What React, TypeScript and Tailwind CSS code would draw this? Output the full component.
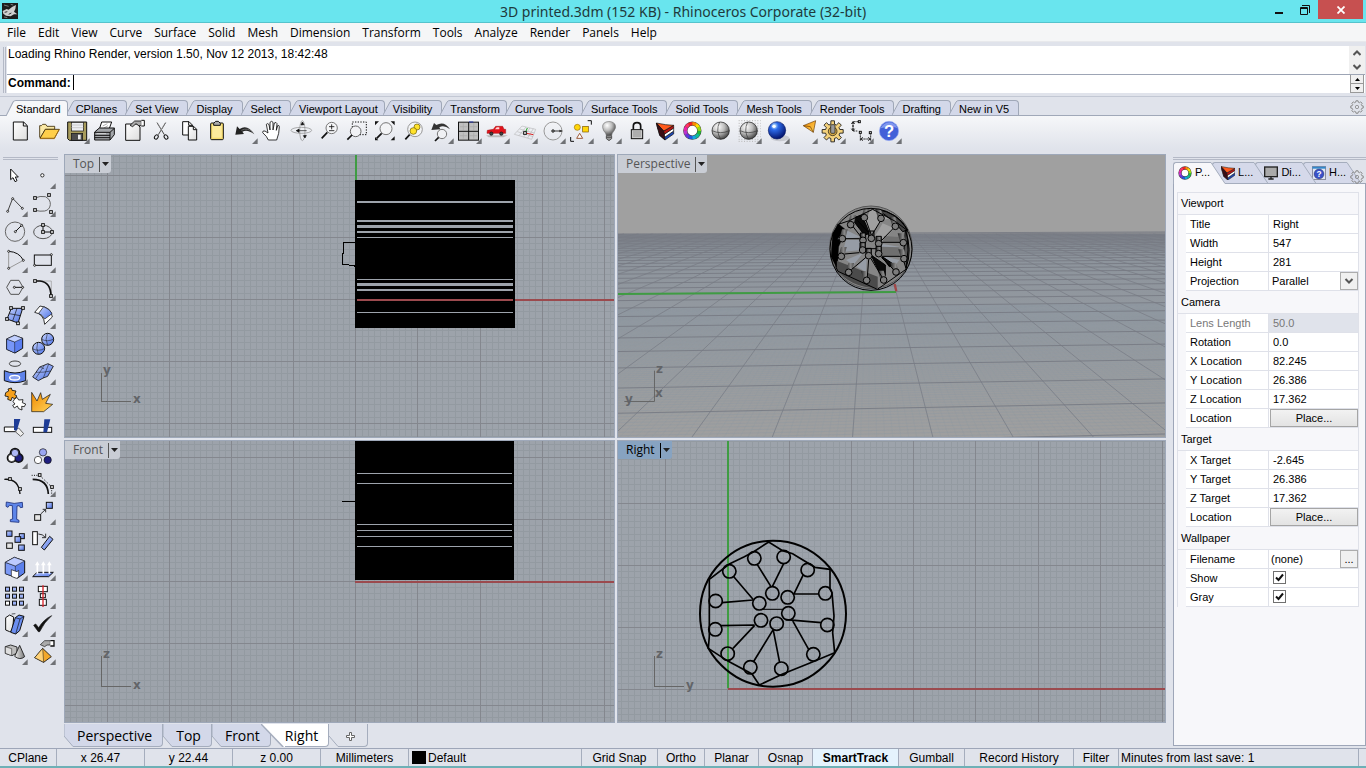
import React from "react";

/* ---------- shared drawing helpers ---------- */

type P = { x: number; y: number; corner?: boolean; label: string; children: React.ReactNode };

// Every tool glyph is drawn at three units per pixel inside a 28px cell.
function Tool({ x, y, corner, label, children }: P) {
  return (
    <button type="button" aria-label={label} title={label} className="block h-7 w-7 shrink-0">
      <svg viewBox={`${x} ${y} 84 84`} className="block h-7 w-7" fill="none" stroke="#111" strokeWidth="3">
        {children}
        {corner && <path d={`M${x + 83} ${y + 64}V${y + 81}H${x + 66}Z`} fill="#6f7175" stroke="none" />}
      </svg>
    </button>
  );
}

function Pts({ at, r = 4 }: { at: number[][]; r?: number }) {
  return (
    <>
      {at.map(([x, y]) => (
        <rect key={`${x}-${y}`} x={x - r} y={y - r} width={r * 2} height={r * 2} fill="#fff" stroke="#111" />
      ))}
    </>
  );
}

function Dots({ at, r = 3 }: { at: number[][]; r?: number }) {
  return (
    <>
      {at.map(([x, y]) => (
        <circle key={`${x}-${y}`} cx={x} cy={y} r={r} fill="#fff" stroke="#111" strokeWidth="2.5" />
      ))}
    </>
  );
}

const HUES = ["#2b3", "#1b9", "#1ad", "#25d", "#63d", "#b3c", "#e2a", "#f36", "#e22", "#f80", "#fd0", "#9d1"];

function ColorRing({ cx, cy, r, w }: { cx: number; cy: number; r: number; w: number }) {
  return (
    <g>
      <circle cx={cx} cy={cy} r={r} stroke="#444" strokeWidth={w + 3} fill="#fff" />
      {HUES.map((c, i) => (
        <circle key={c} cx={cx} cy={cy} r={r} pathLength={12} strokeDasharray="1.05 10.95" strokeDashoffset={-i} stroke={c} strokeWidth={w} />
      ))}
    </g>
  );
}

function LayerWedge({ x, y }: { x: number; y: number }) {
  return (
    <g transform={`translate(${x} ${y})`} strokeWidth="2" strokeLinejoin="round">
      <path d="M8 30L26 44L52 27V36L26 54L10 40Z" fill="#1d46b4" />
      <path d="M4 18L24 36L52 18V27L26 45L8 31Z" fill="#fff" />
      <path d="M0 3L22 27L52 10V18L24 37L4 19Z" fill="#b81414" />
      <path d="M0 3L28 8L52 10L22 27Z" fill="#ff5a1c" />
      <path d="M0 3L22 27L24 36L26 54L10 40L4 19Z" fill="#3a0d14" />
    </g>
  );
}

function gearPath(cx: number, cy: number, teeth: number, r1: number, r2: number) {
  const pts: string[] = [];
  for (let i = 0; i < teeth; i++) {
    const a = (i / teeth) * Math.PI * 2;
    const s = Math.PI / teeth;
    [[-0.65, r1], [-0.42, r2], [0.42, r2], [0.65, r1]].forEach(([k, r]) => {
      pts.push(`${(cx + Math.cos(a + s * k) * r).toFixed(1)} ${(cy + Math.sin(a + s * k) * r).toFixed(1)}`);
    });
  }
  return `M${pts.join("L")}Z`;
}

function Gear() {
  return (
    <svg viewBox="0 0 42 42" className="block h-[14px] w-[14px]" fill="none" stroke="#8b8b8b" strokeWidth="3">
      <path d={gearPath(21, 21, 8, 15, 19)} strokeLinejoin="round" />
      <circle cx="21" cy="21" r="5" strokeWidth="2.5" />
    </svg>
  );
}

function Sphere({ cx }: { cx: number }) {
  return (
    <g>
      <circle cx={cx} cy="392" r="26" fill="url(#graySphere)" strokeWidth="2" />
      <path d={`M${cx - 26} 392Q${cx} 404 ${cx + 26} 392M${cx - 3} 366Q${cx - 16} 392 ${cx} 418`} strokeWidth="2" stroke="#333" />
    </g>
  );
}

function Defs() {
  return (
    <svg className="absolute h-0 w-0" aria-hidden="true">
      <defs>
        <radialGradient id="graySphere" cx="35%" cy="28%" r="75%">
          <stop offset="0" stopColor="#fff" />
          <stop offset=".5" stopColor="#bbb" />
          <stop offset="1" stopColor="#444" />
        </radialGradient>
        <radialGradient id="blueSphere" cx="35%" cy="25%" r="75%">
          <stop offset="0" stopColor="#dff" />
          <stop offset=".3" stopColor="#2d6bea" />
          <stop offset="1" stopColor="#04156e" />
        </radialGradient>
        <linearGradient id="blueFace" x1="0" y1="0" x2="1" y2="1">
          <stop offset="0" stopColor="#c8d5ff" />
          <stop offset="1" stopColor="#4a70e4" />
        </linearGradient>
        <linearGradient id="paper" x1="0" y1="0" x2="1" y2="1">
          <stop offset="0" stopColor="#fff" />
          <stop offset="1" stopColor="#ddd" />
        </linearGradient>
        <linearGradient id="orange" x1="0" y1="0" x2="1" y2="1">
          <stop offset="0" stopColor="#f08a00" />
          <stop offset="1" stopColor="#ffd45c" />
        </linearGradient>
        <linearGradient id="grayFace" x1="0" y1="0" x2="1" y2="0">
          <stop offset="0" stopColor="#eee" />
          <stop offset="1" stopColor="#777" />
        </linearGradient>
        <linearGradient id="floor" x1="0" y1="0" x2="0" y2="1">
          <stop offset="0" stopColor="#80868e" />
          <stop offset=".12" stopColor="#8d949c" />
          <stop offset=".35" stopColor="#92989f" />
          <stop offset=".7" stopColor="#999c9f" />
          <stop offset="1" stopColor="#9f9f9f" />
        </linearGradient>
        <linearGradient id="tube" x1="0" y1="0" x2="1" y2="0">
          <stop offset="0" stopColor="#222" />
          <stop offset=".6" stopColor="#8a8a8a" />
          <stop offset="1" stopColor="#4a4a4a" />
        </linearGradient>
      </defs>
    </svg>
  );
}

/* ---------- main toolbar ---------- */

function MainToolbar() {
  return (
    <div role="toolbar" aria-label="Standard" className="flex h-[33px] bg-linear-to-b from-[#f6f7f9] to-[#e0e3eb] pt-px pl-[6px]">
      <Tool x={18} y={351} label="New">
        <path d="M40 366H71L82 377V420H40Z" fill="url(#paper)" />
        <path d="M70 366V378H82" />
      </Tool>
      <Tool x={102} y={351} label="Open">
        <path d="M119 411V377H124L128 373H137L141 379H164V388H136L121 414Z" fill="#fbe9a5" stroke="#3b2a08" strokeWidth="2.5" />
        <path d="M120 415L136 388H178L163 415Z" fill="#ffcf4a" stroke="#3b2a08" strokeWidth="2.5" />
        <path d="M120 416H163L178 388" stroke="#c27a05" strokeWidth="2" />
      </Tool>
      <Tool x={186} y={351} corner label="Save">
        <path d="M203 366H260V421H208L203 416Z" fill="#a89c5c" />
        <rect x="214" y="367" width="36" height="26" fill="#eceef2" strokeWidth="2" />
        <path d="M214 375H250M214 383H250" stroke="#bbb" strokeWidth="2" />
        <rect x="214" y="400" width="34" height="21" fill="#4d4d4d" strokeWidth="2" />
        <rect x="234" y="404" width="8" height="14" fill="#eee" stroke="none" />
      </Tool>
      <Tool x={270} y={351} label="Print">
        <path d="M298 388L305 366H335L327 388Z" fill="#fff" />
        <path d="M308 378L322 371M312 384L324 377" stroke="#888" strokeWidth="2" />
        <path d="M284 396L298 384H343V404L330 420H284Z" fill="#a3a6aa" strokeLinejoin="round" />
        <path d="M284 397H330V420M330 397L343 385M284 406H330M284 413H330" />
        <path d="M290 401H318" stroke="#eee" strokeWidth="2" />
      </Tool>
      <Tool x={354} y={351} label="Properties">
        <path d="M377 372H411L420 381V421H377Z" fill="url(#paper)" />
        <path d="M390 376L404 363H424V377H416L408 371L398 380Z" fill="#aaa" strokeWidth="2.5" />
        <path d="M424 361H433V378H424" fill="#fff" />
      </Tool>
      <Tool x={438} y={351} label="Cut">
        <path d="M471 368L493 404M497 368L475 404" stroke="#444" />
        <path d="M472 368L486 392M496 368L482 392" stroke="#999" strokeWidth="2" />
        <ellipse cx="469" cy="411" rx="5" ry="7" transform="rotate(35 469 411)" />
        <ellipse cx="498" cy="411" rx="5" ry="7" transform="rotate(-35 498 411)" />
      </Tool>
      <Tool x={522} y={351} label="Copy">
        <path d="M548 365H567L577 375V405H548Z" fill="#fff" />
        <path d="M566 365V376H577" />
        <path d="M565 379H581L590 388V420H565Z" fill="url(#paper)" />
        <path d="M580 379V389H590" />
      </Tool>
      <Tool x={606} y={351} label="Paste">
        <rect x="632" y="369" width="38" height="50" rx="3" fill="#f8dd6d" />
        <path d="M637 374H665V413H637Z" fill="#fdeb9d" stroke="none" />
        <path d="M641 376V370L647 364H655L661 370V376Z" fill="#aaa" />
      </Tool>
      <Tool x={690} y={351} corner label="Undo">
        <path d="M706 404L711 379L719 387Q742 371 763 403Q742 386 727 395L732 402Z" fill="#222" stroke="none" />
        <path d="M724 391Q743 381 760 398" stroke="#888" strokeWidth="2" />
      </Tool>
      <Tool x={774} y={351} label="Pan">
        <path d="M805 420Q801 409 788 398Q787 391 795 393L804 399L799 373Q803 368 807 374L810 390V367Q815 361 819 367V390L823 369Q829 365 831 371L829 391L833 377Q838 375 838 380Q838 400 830 420Z" fill="#fff" strokeWidth="2.5" strokeLinejoin="round" />
      </Tool>
      <Tool x={858} y={351} label="Rotate view">
        <ellipse cx="904" cy="391" rx="31" ry="9" stroke="#888" strokeWidth="2" />
        <ellipse cx="907" cy="392" rx="8" ry="30" stroke="#888" strokeWidth="2" />
        <path d="M897 387L889 392L897 397ZM912 374L907 366L903 375ZM910 407L915 414L919 406Z" fill="#111" stroke="#111" strokeWidth="2" />
        <path d="M889 392H920" strokeWidth="2" />
      </Tool>
      <Tool x={942} y={351} label="Zoom dynamic">
        <circle cx="995" cy="384" r="17" stroke="#777" fill="#f5f6f8" />
        <path d="M995 373V388M987 380H1003M987 392H1003" strokeWidth="2.5" />
        <path d="M982 397L965 415" strokeWidth="5" />
      </Tool>
      <Tool x={1026} y={351} label="Zoom window">
        <rect x="1057" y="366" width="42" height="38" strokeDasharray="4 4" />
        <circle cx="1067" cy="394" r="16" stroke="#666" fill="#f1f2f5" />
        <path d="M1056 405L1042 419" strokeWidth="5" />
      </Tool>
      <Tool x={1110} y={351} label="Zoom extents">
        <circle cx="1158" cy="386" r="18" stroke="#777" fill="#f3f4f6" />
        <path d="M1145 400L1130 415" strokeWidth="5" />
        <path d="M1125 364H1137L1125 376ZM1184 364H1172L1184 376ZM1184 421H1172L1184 409ZM1125 421H1135L1125 411Z" fill="#111" stroke="none" />
      </Tool>
      <Tool x={1194} y={351} label="Zoom selected">
        <circle cx="1245" cy="388" r="22" stroke="#999" fill="#f3f4f6" />
        <path d="M1229 404L1216 418" strokeWidth="5" />
        <circle cx="1251" cy="381" r="9" fill="#ffe22b" stroke="#6b5a00" strokeWidth="2" />
        <circle cx="1240" cy="393" r="10" fill="#ffe22b" stroke="#6b5a00" strokeWidth="2" />
      </Tool>
      <Tool x={1278} y={351} corner label="Undo view change">
        <circle cx="1326" cy="402" r="14" stroke="#777" fill="#f0f1f4" />
        <path d="M1316 412L1305 423" strokeWidth="5" />
        <path d="M1294 390L1302 369L1309 375Q1333 361 1350 388Q1332 374 1318 382L1321 388Z" fill="#333" stroke="none" />
      </Tool>
      <Tool x={12} y={351} corner label="Four viewports">
        <rect x="25.500" y="366.500" width="60" height="54" fill="#c0c0c0" />
        <path d="M56 366V420M25 394H86" />
        <path d="M30 380H52M60 380H82M30 407H52M60 407H82M40 370V390M71 370V390M40 398V416M71 398V416" stroke="#a9a9a9" strokeWidth="2" />
        <path d="M57 366H70" stroke="#2233aa" />
      </Tool>
      <Tool x={96} y={351} corner label="Named view">
        <path d="M108 406H174L160 412H116Z" fill="#bbb" stroke="none" />
        <path d="M111 400L112 391L130 388L137 379H158L162 388H167V400H111Z" fill="#e1121b" stroke="#9d1515" strokeWidth="1.5" />
        <path d="M140 382H148V388H135Z" fill="#ffd6d6" stroke="none" />
        <circle cx="124" cy="401" r="5" fill="#444" strokeWidth="2" />
        <circle cx="154" cy="401" r="5" fill="#444" strokeWidth="2" />
      </Tool>
      <Tool x={180} y={351} corner label="Set CPlane">
        <path d="M193 403L216 378L257 388L245 418ZM202 395L249 410M209 387L253 399M207 407L228 381M221 411L240 384M233 414L250 386" stroke="#aaa" strokeWidth="1.500" />
        <path d="M232 384L227 396" stroke="#1ca01c" />
        <path d="M230 400L250 404" stroke="#d22" />
        <Pts at={[[225, 399]]} />
      </Tool>
      <Tool x={264} y={351} corner label="Set view">
        <circle cx="309" cy="393" r="27" stroke="#999" />
        <path d="M309 393H336" strokeWidth="2.5" />
        <circle cx="309" cy="393" r="4" fill="#777" strokeWidth="2" />
        <path d="M339 393L328 389V397Z" fill="#333" stroke="none" />
      </Tool>
      <Tool x={348} y={351} corner label="Select">
        <circle cx="382" cy="382" r="9" fill="#ffd60a" stroke="#9b7000" strokeWidth="2" />
        <rect x="398" y="379" width="17" height="17" fill="#ffd60a" stroke="#7b5600" strokeWidth="2" />
        <path d="M380 415H398L389 400Z" fill="#fff" stroke="#8a3b12" strokeWidth="2.5" />
        <path d="M413 362H424V374M362 411V424H372" />
      </Tool>
      <Tool x={432} y={351} corner label="Lights">
        <path d="M469 406Q469 400 461 392Q452 372 468 366Q486 361 495 373Q500 383 491 394Q485 400 485 406Z" fill="url(#graySphere)" strokeWidth="2" stroke="#777" />
        <path d="M469 407H485V416L477 422L469 416ZM469 412H485" fill="#999" strokeWidth="2.5" stroke="#444" />
      </Tool>
      <Tool x={516} y={351} corner label="Lock">
        <path d="M550 389V378Q550 368 561 368Q572 368 572 378V389" strokeWidth="5" />
        <rect x="544" y="389" width="34" height="27" fill="#c9c9c9" />
        <path d="M549 396H573M549 402H573M549 408H573" stroke="#777" strokeWidth="2" />
      </Tool>
      <Tool x={600} y={351} corner label="Layers">
        <LayerWedge x={619} y={366} />
      </Tool>
      <Tool x={684} y={351} corner label="Object properties">
        <ColorRing cx={727} cy={392} r={21} w={10} />
      </Tool>
      <Tool x={768} y={351} label="Shade">
        <Sphere cx={812} />
      </Tool>
      <Tool x={852} y={351} corner label="Render preview">
        <path d="M866 362H932M866 370H932M866 378H932M866 386H932M866 394H932M866 402H932M866 410H932M866 418H932M866 424H932" stroke="#b5b5b5" strokeDasharray="3 5" />
        <Sphere cx={896} />
      </Tool>
      <Tool x={936} y={351} corner label="Render">
        <ellipse cx="990" cy="414" rx="28" ry="10" fill="#c8cad0" stroke="none" />
        <circle cx="981" cy="391" r="26" fill="url(#blueSphere)" stroke="#0b1c66" strokeWidth="2" />
        <circle cx="972" cy="379" r="5" fill="#fff" stroke="none" />
      </Tool>
      <Tool x={1020} y={351} corner label="Spotlight">
        <path d="M1060 377L1097 362L1090 397Z" fill="url(#orange)" strokeWidth="2" stroke="#6b3b00" />
        <path d="M1060 377L1081 380L1090 397" stroke="#6b3b00" strokeWidth="2" />
      </Tool>
      <Tool x={1104} y={351} corner label="Options">
        <path d={gearPath(1148, 394, 8, 22, 32)} fill="#f3d17c" strokeWidth="2.5" strokeLinejoin="round" />
        <circle cx="1148" cy="394" r="13" fill="#d9ab45" strokeWidth="2" />
        <rect x="1142" y="374" width="13" height="26" rx="3" fill="#999" strokeWidth="2" />
      </Tool>
      <Tool x={1188} y={351} corner label="Dimensions">
        <path d="M1226 365H1209V393H1222M1209 365V393M1231 397V424M1262 397V424M1231 417H1262" strokeDasharray="7 2" strokeWidth="2.5" />
        <path d="M1204 372L1209 365L1214 372M1204 386L1209 393L1214 386M1239 412L1232 417L1239 422M1254 412L1261 417L1254 422" strokeWidth="2.5" />
        <Pts at={[[1228, 365], [1231, 397], [1261, 398]]} r={3} />
      </Tool>
      <Tool x={1272} y={351} corner label="Help">
        <circle cx="1317" cy="393" r="29" fill="#4260d8" stroke="#9fb1f3" strokeWidth="2" />
        <path d="M1292 385Q1300 368 1318 367Q1336 369 1342 384Q1320 376 1292 385Z" fill="#7f97ee" stroke="none" />
        <text x="1317" y="411" textAnchor="middle" fontSize="50" fontWeight="bold" fill="#fff" stroke="none" fontFamily="Liberation Sans, sans-serif">?</text>
      </Tool>
    </div>
  );
}

/* ---------- side toolbar ---------- */

const B = "url(#blueFace)";

function SideToolbar() {
  return (
    <aside className="w-16 shrink-0">
      <div className="mx-[3px] mt-2 mr-[6px] h-[3px] border-y border-[#b4b9c6]" />
      <div role="toolbar" aria-label="Main" className="mt-[2px] grid w-14 grid-cols-2">
        <Tool x={0} y={36} label="Cancel">
          <path d="M32 57V89L39 83L45 95L51 92L46 81H55Z" fill="#fff" />
        </Tool>
        <Tool x={84} y={36} corner label="Point">
          <circle cx="127" cy="76" r="5" fill="#fff" strokeWidth="2.5" />
        </Tool>
        <Tool x={0} y={120} corner label="Polyline">
          <path d="M23 184L38 145L67 175" stroke="#444" />
          <Dots at={[[23, 184], [38, 146], [67, 175]]} />
        </Tool>
        <Tool x={84} y={120} corner label="Curve">
          <path d="M105 144Q120 137 136 140Q152 148 151 164Q149 180 134 183Q120 185 105 181" stroke="#666" />
          <Pts at={[[105, 144], [147, 135], [153, 186], [105, 180]]} />
        </Tool>
        <Tool x={0} y={204} corner label="Circle">
          <circle cx="45" cy="245" r="29" stroke="#666" />
          <path d="M46 245L64 227" />
          <Dots at={[[46, 245], [65, 226]]} />
        </Tool>
        <Tool x={84} y={204} corner label="Ellipse">
          <ellipse cx="129" cy="246" rx="28" ry="20" stroke="#555" />
          <path d="M129 226V246H155" />
          <Pts at={[[129, 225], [129, 246], [156, 246]]} />
        </Tool>
        <Tool x={0} y={288} corner label="Arc">
          <path d="M26 355V304M26 355L70 331" stroke="#999" />
          <path d="M26 304Q58 306 70 331" />
          <Dots at={[[26, 304], [26, 355], [70, 331]]} />
        </Tool>
        <Tool x={84} y={288} corner label="Rectangle">
          <rect x="103" y="315" width="51" height="31" />
          <Dots at={[[154, 314], [104, 346]]} />
        </Tool>
        <Tool x={0} y={372} corner label="Polygon">
          <path d="M20 412L32 391H57L69 412L57 433H32Z" stroke="#555" />
          <path d="M43 412H68" />
          <Dots at={[[43, 412], [68, 412]]} />
        </Tool>
        <Tool x={84} y={372} corner label="Fillet">
          <path d="M105 393H154V438" stroke="#999" strokeWidth="2" />
          <path d="M105 393H120Q152 396 153 438" strokeWidth="5" />
          <Pts at={[[105, 393], [153, 438]]} />
        </Tool>
        <Tool x={0} y={456} corner label="Surface">
          <path d="M34 475H68L54 519L21 507Z" fill={B} />
          <path d="M51 475L38 513M28 491L61 497" strokeWidth="2" />
          <Pts at={[[33, 474], [69, 474], [54, 520], [21, 507]]} />
        </Tool>
        <Tool x={84} y={456} corner label="Loft">
          <path d="M104 487L120 468Q154 472 157 501L134 523Q132 492 104 487Z" fill="#fff" strokeWidth="2.5" />
          <path d="M116 490L131 470Q152 478 156 491L134 507Q128 495 116 490Z" fill={B} strokeWidth="2" />
        </Tool>
        <Tool x={0} y={540} corner label="Box">
          <path d="M20 567L44 556L68 565V595L45 609L20 598Z" fill="#5b7ef0" />
          <path d="M20 567L44 576V609L20 598Z" fill="#7796f8" strokeWidth="1.5" />
          <path d="M20 567L44 556L68 565L44 576Z" fill="#c2d0ff" strokeWidth="1.5" />
        </Tool>
        <Tool x={84} y={540} corner label="Sphere union">
          <circle cx="143" cy="568" r="18" fill={B} />
          <circle cx="116" cy="595" r="18" fill={B} />
          <path d="M125 568Q143 577 161 567M98 596Q116 606 134 595M142 551Q134 568 143 586M113 577Q107 595 115 613" strokeWidth="1.5" />
        </Tool>
        <Tool x={0} y={624} corner label="Project curve">
          <ellipse cx="45" cy="641" rx="17" ry="8" stroke="#444" />
          <path d="M13 662Q45 676 77 662V692Q45 704 13 692Z" fill="#5f83ea" />
          <ellipse cx="44" cy="683" rx="15" ry="7" fill="#8ba3f0" stroke="#fff" strokeWidth="4" />
        </Tool>
        <Tool x={84} y={624} corner label="Mesh">
          <path d="M98 681L119 651Q132 646 144 641L160 649L143 679Q129 683 115 692Z" fill={B} strokeWidth="2.5" />
          <path d="M108 667Q130 668 152 663M133 646L107 686M146 642L130 684M119 651L132 656" strokeWidth="1.5" />
        </Tool>
        <Tool x={0} y={-12} label="Join">
          <path d="M17 8L26 3L24 -3L34 -6L36 1L48 3L44 14L51 18L44 26L36 22L33 32L23 28L25 20L15 18Z" fill="#f5a01c" strokeWidth="2.5" strokeLinejoin="round" />
          <path d="M43 28L51 22L56 30L69 29L67 38L77 42L73 50L65 49L66 60L56 56L52 48L43 54L38 46L45 42L39 35Z" fill="#fff" strokeWidth="2.5" strokeLinejoin="round" />
        </Tool>
        <Tool x={84} y={-12} label="Explode">
          <path d="M95 7L111 33L122 8L127 28L151 13L137 40L158 43L131 65H95Z" fill="url(#orange)" strokeWidth="2" />
        </Tool>
        <Tool x={0} y={72} label="Trim">
          <path d="M13 111H48V125H13Z" fill="#fff" />
          <path d="M50 117L56 114L71 131L62 139L47 126Z" fill="#eee" stroke="#666" />
          <path d="M42 87H61L51 121H42Z" fill="#1e3c96" stroke="none" />
        </Tool>
        <Tool x={84} y={72} label="Split">
          <rect x="100" y="112" width="55" height="15" fill="#fff" />
          <path d="M133 88H151L141 127H130Z" fill="#1e3c96" stroke="none" />
        </Tool>
        <Tool x={0} y={156} corner label="Group">
          <g strokeWidth="8">
            <circle cx="45" cy="189" r="12" />
            <circle cx="35" cy="204" r="11" />
            <circle cx="56" cy="204" r="11" />
          </g>
          <circle cx="35" cy="204" r="11" fill="#fff" strokeWidth="2" />
          <circle cx="56" cy="204" r="11" fill="#1e1e80" strokeWidth="2" />
          <circle cx="45" cy="189" r="11" fill="#aeb8f5" strokeWidth="2" />
        </Tool>
        <Tool x={84} y={156} label="Ungroup">
          <circle cx="129" cy="187" r="11" fill="#9aa6f2" strokeWidth="2" />
          <circle cx="114" cy="210" r="11" fill="#fff" strokeWidth="2" />
          <circle cx="143" cy="210" r="11" fill="#1e1e80" strokeWidth="2" />
        </Tool>
        <Tool x={0} y={240} label="Edit points">
          <path d="M13 268Q56 265 60 312" strokeWidth="4" />
          <Pts at={[[30, 267], [60, 297]]} />
        </Tool>
        <Tool x={84} y={240} corner label="Control points">
          <path d="M95 256H119L155 291V316" strokeDasharray="3 4" />
          <path d="M98 268Q143 268 145 312" strokeWidth="5" />
          <Pts at={[[119, 255], [156, 291]]} />
        </Tool>
        <Tool x={0} y={324} label="Text">
          <path d="M19 336Q42 344 67 337L68 352L61 353L58 347L51 348L50 388L57 391V397L31 395V389L38 387L37 347L28 346L24 352L18 349Z" fill="#5e86ea" stroke="#1c2f7c" strokeWidth="2.5" strokeLinejoin="round" />
        </Tool>
        <Tool x={84} y={324} corner label="Move">
          <rect x="104" y="374" width="18" height="17" fill="#e5e5e5" />
          <rect x="139" y="337" width="18" height="18" fill={B} />
          <path d="M122 372L136 359M128 358H137V367" strokeWidth="2.5" />
        </Tool>
        <Tool x={0} y={408} label="Copy objects">
          <rect x="58" y="431" width="15" height="15" fill={B} />
          <rect x="45" y="440" width="17" height="17" fill={B} />
          <rect x="20" y="423" width="16" height="16" fill={B} />
          <rect x="20" y="459" width="17" height="16" fill="#e5e5e5" />
          <rect x="56" y="465" width="17" height="16" fill={B} />
        </Tool>
        <Tool x={84} y={408} label="Rotate">
          <rect x="98" y="425" width="14" height="39" fill="#fff" />
          <path d="M124 472L149 439L159 448L133 480Z" fill={B} />
          <path d="M115 432Q128 432 136 442M137 431V443H126" strokeWidth="2.5" />
        </Tool>
        <Tool x={0} y={492} corner label="Boolean">
          <path d="M16 517L43 502L74 513V549L53 564L16 551Z" fill="#5c80ec" />
          <path d="M16 517L46 528V562L16 551Z" fill="#7c9af6" strokeWidth="1.5" />
          <path d="M16 517L43 502L74 513L46 528Z" fill="#bccbff" strokeWidth="1.5" />
          <path d="M34 539L51 545L56 541V562L49 565L34 559Z" fill="#fff" strokeWidth="2" />
        </Tool>
        <Tool x={84} y={492} corner label="Project">
          <path d="M98 560L111 547H160L146 560Z" fill={B} />
          <path d="M112 551V522M130 551V522M148 551V522" stroke="#fff" strokeWidth="5" />
          <path d="M105 526L112 514L119 526ZM123 526L130 514L137 526ZM141 526L148 514L155 526Z" fill="#fff" stroke="none" />
        </Tool>
        <Tool x={0} y={576} corner label="Array">
          {[0, 1, 2].map((r) =>
            [0, 1, 2].map((c) => (
              <rect key={`${r}${c}`} x={16.5 + c * 21} y={591.5 + r * 21} width="12" height="12" fill={r === 2 && c === 0 ? "#fff" : "#9db2f5"} />
            )),
          )}
        </Tool>
        <Tool x={84} y={576} corner label="Align">
          <rect x="115" y="589" width="27" height="16" fill="#fff" />
          <rect x="121" y="611" width="15" height="12" fill="#fff" />
          <rect x="118" y="628" width="21" height="18" fill="#fff" />
          <path d="M129 586V651" stroke="#d8222a" strokeWidth="4" />
        </Tool>
        <Tool x={0} y={660} corner label="Shear">
          <path d="M17 683L29 675L41 681L38 722L29 725L17 720Z" fill="url(#paper)" />
          <path d="M46 683L57 675L72 679L59 722L47 732L32 727Z" fill="#6b8ef0" />
          <path d="M46 683L60 687L47 732M60 687L72 679M35 672L46 671" strokeWidth="2" />
        </Tool>
        <Tool x={84} y={660} corner label="Check">
          <path d="M101 706L107 702L116 713Q131 688 155 677Q132 697 119 725H115Z" fill="#111" strokeWidth="2" />
        </Tool>
        <Tool x={0} y={744} corner label="Solids">
          <path d="M16 770L32 765L51 771V789L36 797L16 790Z" fill="#bdbdbd" strokeWidth="2.5" />
          <path d="M16 770L35 776V797L16 790Z" fill="#dedede" strokeWidth="1.5" />
          <path d="M59 766L74 800Q60 812 44 799Z" fill="url(#grayFace)" strokeWidth="2.5" />
        </Tool>
        <Tool x={84} y={744} corner label="Edit solid">
          <path d="M128 775L154 800L131 817L104 803Z" fill="#f2a82c" strokeWidth="2.5" />
          <path d="M128 775L131 817L104 803Z" fill="#ffd277" strokeWidth="1.5" />
          <path d="M121 764L134 752H151V765H141L134 770Z" fill="#aaa" strokeWidth="2" />
          <path d="M151 752H162V768H151" fill="#fff" strokeWidth="4" />
        </Tool>
      </div>
    </aside>
  );
}

/* ---------- viewports ---------- */

function gridPath(x0: number, y0: number, x1: number, y1: number, ox: number, oy: number, step: number) {
  let d = "";
  for (let i = Math.ceil((x0 - ox) / step); ox + i * step < x1; i++) d += `M${Math.floor(ox + i * step) + 0.5} ${y0}V${y1}`;
  for (let i = Math.ceil((y0 - oy) / step); oy + i * step < y1; i++) d += `M${x0} ${Math.floor(oy + i * step) + 0.5}H${x1}`;
  return d;
}

function Grid({ x, y, ox, oy }: { x: number; y: number; ox: number; oy: number }) {
  return (
    <>
      <path d={gridPath(x, y, x + 1600, y + 1000, ox, oy, 6.21)} stroke="#939aa1" />
      <path d={gridPath(x, y, x + 1600, y + 1000, ox, oy, 62.1)} stroke="#84878e" />
    </>
  );
}

function Viewport({ name, x, y, active, children }: { name: string; x: number; y: number; active?: boolean; children: React.ReactNode }) {
  return (
    <section aria-label={name} className="relative min-h-0 min-w-0 overflow-hidden border border-[#9ea8b9] bg-[#9da3ab]">
      <svg className="block h-full w-full" fill="none" stroke="#000">
        <g transform={`translate(${-x} ${-y})`}>{children}</g>
      </svg>
      <button
        type="button"
        className={`absolute top-0 left-0 flex h-[18px] items-center rounded-br-[3px] pl-2 ${active ? "bg-[#87a3c1] text-black" : "bg-[#c9cdd5] text-[#555]"}`}
      >
        <span className="pr-[5px] font-['Open_Sans',sans-serif] text-xs leading-4">{name}</span>
        <span className="h-[15px] w-px bg-current" />
        <svg viewBox="0 0 11 6" className="h-[6px] w-[11px]">
          <path d="M2 1H9L5.5 5Z" fill="#222" />
        </svg>
      </button>
    </section>
  );
}

function AxisText({ x, y, children }: { x: number; y: number; children: string }) {
  return (
    <text x={x} y={y} fontSize="12" fontWeight="bold" fill="#626468" stroke="none" fontFamily="DejaVu Sans, sans-serif">
      {children}
    </text>
  );
}

function Bands({ rows, x, w }: { rows: number[][]; x: number; w: number }) {
  return (
    <>
      {rows.map(([y, h]) => (
        <rect key={y} x={x} y={y} width={w} height={h} fill="#9da3ab" stroke="none" />
      ))}
    </>
  );
}

function TopView() {
  return (
    <Viewport name="Top" x={65} y={155}>
      <g shapeRendering="crispEdges">
        <Grid x={65} y={155} ox={355.8} oy={299.4} />
        <path d="M356 155V181" stroke="#3f9c43" strokeWidth="2" />
        <rect x="355" y="180" width="160" height="148" fill="#000" stroke="none" />
        <Bands x={357} w={156} rows={[[201, 2], [220, 2], [225, 3], [231, 2], [237, 1], [279, 1], [283, 3], [289, 2], [312, 1]]} />
        <path d="M357 300H513M515 300H614" stroke="#9b4a4e" strokeWidth="2" />
        <path d="M355 242.500H343.500V253L342.500 254V264.500H348L350 265.500H354L355 266.500" />
        <path d="M101.500 373V401.500H131" stroke="#666" />
      </g>
      <AxisText x={103} y={374}>y</AxisText>
      <AxisText x={133} y={403}>x</AxisText>
    </Viewport>
  );
}

function FrontView() {
  return (
    <Viewport name="Front" x={65} y={441}>
      <g shapeRendering="crispEdges">
        <Grid x={65} y={441} ox={355.8} oy={581.2} />
        <rect x="355" y="441" width="159" height="139" fill="#000" stroke="none" />
        <Bands x={357} w={155} rows={[[473, 1], [483, 1], [524, 1], [530, 1], [536, 1], [546, 1]]} />
        <path d="M342 501.500H355" />
        <path d="M355 582H614" stroke="#9b4a4e" strokeWidth="2" />
        <path d="M101.500 656V686.500H131" stroke="#666" />
      </g>
      <AxisText x={103} y={658}>z</AxisText>
      <AxisText x={133} y={689}>x</AxisText>
    </Viewport>
  );
}

const OUTER = [[415, 367], [503, 363], [340, 406], [575, 402], [628, 472], [299, 495], [298, 580], [634, 567], [335, 653], [403, 694], [496, 698], [592, 655]];
const INNER = [[469, 472], [515, 484], [430, 502], [517, 532], [435, 553], [482, 563]];

function RightView() {
  return (
    <Viewport name="Right" x={618} y={441} active>
      <g shapeRendering="crispEdges">
        <Grid x={618} y={441} ox={727.5} oy={689.4} />
        <path d="M728 441V688" stroke="#3f9c43" strokeWidth="2" />
        <path d="M728 689H2000" stroke="#9b4a4e" strokeWidth="2" />
        <path d="M654.500 656V686.500H684" stroke="#666" />
      </g>
      <AxisText x={656} y={658}>z</AxisText>
      <AxisText x={686} y={689}>y</AxisText>
      <g transform="translate(616 436) scale(0.33333)" strokeWidth="5">
        <circle cx="471" cy="533" r="219" strokeWidth="6" />
        <path strokeWidth="5" d="M458 318L412 348L385 362L340 384L280 430V600L277 637L337 676L408 714L430 747L500 714L580 682L656 650L650 590L654 540L648 470L642 460V400L597 394L530 353L500 344Z" />
        {OUTER.concat(INNER).map(([x, y]) => (
          <circle key={`${x}${y}`} cx={x} cy={y} r="20" />
        ))}
        <path d="M424 386L465 452M503 383L469 452M352 421L411 490M562 416L534 474H608M318 500L411 492M315 569L416 567M351 637L416 568M472 580L412 678M472 583L491 680M510 551L615 560M528 551L578 640" />
        <path d="M440 520H502" strokeWidth="3" />
      </g>
    </Viewport>
  );
}

// Ground lines: rails converge on the vanishing point, rungs are evenly spaced in inverse depth.
const VX = 763;
const VY = 120;

function rails(step: number, y0: number) {
  let d = "";
  for (let s = 0.253 - 0.325 * 32; s < 0.325 * 40; s += step) {
    d += `M${(VX + s * (y0 - VY)).toFixed(1)} ${y0}L${(VX + s * 1200).toFixed(1)} ${VY + 1200}`;
  }
  return d;
}

function rungs(step: number, from: number, to: number) {
  let d = "";
  for (let u = from; u < to; u += step) {
    const h = 1 / u;
    d += `M0 ${(VY + h).toFixed(1)}L3000 ${(VY + h * (1 - 3000 / 35500)).toFixed(1)}`;
  }
  return d;
}

const HUBS = [[741, 271], [766, 265], [788, 281], [740, 300], [758, 317], [788, 311]];
const RIM = [[745, 203], [795, 205], [838, 229], [862, 278], [864, 326], [840, 366], [803, 390], [752, 391], [698, 367], [676, 319], [679, 266], [704, 224]];

function PerspectiveView() {
  return (
    <Viewport name="Perspective" x={618} y={155}>
      <g transform="translate(616 150) scale(0.33333)">
        <rect x="0" y="0" width="4000" height="252" fill="#a0a0a0" stroke="none" />
        <rect x="0" y="252" width="4000" height="612" fill="url(#floor)" stroke="none" />
        <rect x="0" y="864" width="4000" height="1000" fill="#9f9f9f" stroke="none" />
        <g strokeWidth="3">
          <path d={rails(0.0325, 480)} stroke="#8f98a3" opacity=".25" />
          <path d={rungs(0.000019, 0.0009, 0.0028)} stroke="#8c96a3" opacity=".35" />
          <path d={rails(0.325, 252)} stroke="#7a7e86" opacity=".8" />
          <path d={rungs(0.00019, 0.000923, 0.0076)} stroke="#777b83" opacity=".9" />
        </g>
        <path d="M0 432L840 426" stroke="#3f9c43" strokeWidth="6" />
        <path d="M836 402L841 424M803 280L806 292" stroke="#a04848" strokeWidth="7" />
        <path d="M115.500 662V754.500H25" stroke="#666" strokeWidth="3" />
        <circle cx="765" cy="292" r="124" fill="#858585" stroke="#555" strokeWidth="3" />
        <path d="M650 250L668 222L690 240L668 290L664 358L645 320Z" fill="#000" />
        <path d="M662 332L785 380V415Q700 412 662 358Z" fill="#4b4b4b" stroke="none" />
        <path d="M690 240L735 262L664 268ZM690 270H735V300L680 306ZM690 330L742 308L712 345ZM722 350L752 322L750 366ZM800 282L850 290L848 312L792 300ZM800 318L850 330L835 350Z" fill="#969ca5" stroke="none" />
        <path d="M706 205L736 196L765 250L745 255ZM725 212L760 250M765 315L808 345V378L790 366ZM796 318L836 345L820 350Z" fill="#0a0a0a" strokeWidth="3" />
        <path d="M770 180L740 195L764 254L795 212L822 205ZM800 220L835 235L796 275L776 260Z" fill="#a0a0a0" stroke="none" />
        <path d="M792 290L850 292V320H795ZM805 258L858 262L852 278H800Z" fill="#6f6f6f" stroke="none" />
        <path d="M780 178Q850 188 875 240L860 245Q830 205 780 178Z" fill="#444" strokeWidth="3" />
        <path d="M868 240Q890 300 870 355L862 330Z" fill="#555" strokeWidth="3" />
        {HUBS.map(([x, y]) => (
          <g key={`${x}${y}`} strokeWidth="3">
            <path d={`M${x - 8} ${y}V${y - 22}H${x + 8}V${y}`} fill="url(#tube)" />
            <circle cx={x} cy={y} r="10" fill="#7c7c7c" />
          </g>
        ))}
        {RIM.map(([x, y]) => {
          const s = x < 750 ? 8 : -8;
          return (
            <g key={`${x}${y}`} strokeWidth="3">
              <path d={`M${x - 9} ${y}L${x - 9 + s} ${y - 28}H${x + 8 + s}L${x + 9} ${y}Z`} fill="url(#tube)" stroke="none" />
              <circle cx={x} cy={y} r="10" fill="#7c7c7c" />
            </g>
          );
        })}
        <path
          strokeWidth="3"
          d="M751 213L766 255M792 215L768 255M830 237L796 272M798 277H852M798 319H854M796 322L832 358M765 326L798 381M758 328L754 381M750 322L706 359M686 312L730 308M688 266H731M712 231L736 262M750 296H780"
        />
        <path d="M770 178L700 212L664 224L660 352L666 364L784 418L870 358L876 300L872 240L838 214Z" strokeWidth="3" />
        <circle cx="765" cy="298" r="123" strokeWidth="3" />
      </g>
      <AxisText x={656} y={373}>z</AxisText>
      <AxisText x={655} y={397}>x</AxisText>
      <AxisText x={625} y={403}>y</AxisText>
    </Viewport>
  );
}

/* ---------- properties panel ---------- */

type Row = { label: string; value: string; kind?: "select" | "button" | "check" | "file" | "off" };

const GROUPS: { title: string; rows: Row[] }[] = [
  {
    title: "Viewport",
    rows: [
      { label: "Title", value: "Right" },
      { label: "Width", value: "547" },
      { label: "Height", value: "281" },
      { label: "Projection", value: "Parallel", kind: "select" },
    ],
  },
  {
    title: "Camera",
    rows: [
      { label: "Lens Length", value: "50.0", kind: "off" },
      { label: "Rotation", value: "0.0" },
      { label: "X Location", value: "82.245" },
      { label: "Y Location", value: "26.386" },
      { label: "Z Location", value: "17.362" },
      { label: "Location", value: "Place...", kind: "button" },
    ],
  },
  {
    title: "Target",
    rows: [
      { label: "X Target", value: "-2.645" },
      { label: "Y Target", value: "26.386" },
      { label: "Z Target", value: "17.362" },
      { label: "Location", value: "Place...", kind: "button" },
    ],
  },
  {
    title: "Wallpaper",
    rows: [
      { label: "Filename", value: "(none)", kind: "file" },
      { label: "Show", value: "", kind: "check" },
      { label: "Gray", value: "", kind: "check" },
    ],
  },
];

function Value({ row, id }: { row: Row; id: string }) {
  if (row.kind === "select")
    return (
      <div className="relative flex h-[18px]">
        <select id={id} defaultValue={row.value} className="w-full appearance-none bg-white pl-[3px]">
          <option>Parallel</option>
          <option>Perspective</option>
        </select>
        <span className="pointer-events-none absolute top-0 right-0 flex h-[18px] w-[18px] items-center justify-center border border-[#acacac] bg-[#f0f0f0]">
          <svg viewBox="0 0 10 8" className="h-2 w-[10px]" fill="none" stroke="#555" strokeWidth="2">
            <path d="M1.500 2L5 5.500L8.500 2" />
          </svg>
        </span>
      </div>
    );
  if (row.kind === "button")
    return (
      <div className="flex h-[18px] pl-px">
        <button id={id} type="button" className="w-full border border-[#a5a5a5] bg-linear-to-b from-[#f2f2f2] to-[#e3e3e3] leading-4">
          {row.value}
        </button>
      </div>
    );
  if (row.kind === "check")
    return (
      <div className="relative flex h-[18px] items-center pb-px pl-1">
        <input id={id} type="checkbox" defaultChecked className="peer h-[13px] w-[13px] appearance-none border border-[#707070] bg-white" />
        <svg viewBox="0 0 13 13" className="pointer-events-none absolute left-1 hidden h-[13px] w-[13px] peer-checked:block" fill="none" stroke="#111" strokeWidth="2">
          <path d="M3 6.500L5.500 9L10 3.500" />
        </svg>
      </div>
    );
  if (row.kind === "file")
    return (
      <div className="flex h-[18px]">
        <input id={id} readOnly defaultValue={row.value} className="min-w-0 flex-1 bg-white pl-[2px]" />
        <button type="button" aria-label="Browse" className="w-[18px] border border-[#acacac] bg-[#f0f0f0] leading-4">
          ...
        </button>
      </div>
    );
  return (
    <input
      id={id}
      defaultValue={row.value}
      disabled={row.kind === "off"}
      className="block h-[18px] w-full bg-white pl-1 disabled:bg-[#e0e3eb] disabled:text-[#777]"
    />
  );
}

const PANEL_TABS = [
  { label: "P...", z: "z-40", icon: <ColorRing cx={21} cy={21} r={15} w={7} /> },
  { label: "L...", z: "z-30", icon: <g transform="translate(0 -1) scale(0.8 0.8)"><LayerWedge x={0} y={0} /></g> },
  {
    label: "Di...",
    z: "z-20",
    icon: (
      <>
        <rect x="2" y="3" width="38" height="29" fill="#aaa" stroke="#222" strokeWidth="4" />
        <path d="M13 39H29M21 32V39" stroke="#222" strokeWidth="4" />
      </>
    ),
  },
  {
    label: "H...",
    z: "z-10",
    icon: (
      <>
        <rect x="1" y="2" width="40" height="38" fill="#dfe6f6" stroke="#667" strokeWidth="2" />
        <path d="M1 5H41" stroke="#38c" strokeWidth="6" />
        <circle cx="21" cy="24" r="15" fill="#3b52c8" />
        <text x="21" y="33" fontSize="25" fontWeight="bold" textAnchor="middle" fill="#fff" stroke="none" fontFamily="Liberation Sans, sans-serif">?</text>
      </>
    ),
  },
];

function PropertiesPanel() {
  return (
    <aside className="flex w-[193px] shrink-0 flex-col pb-[2px] text-[11px]">
      <div className="mt-2 h-[3px] border-y border-[#b4b9c6]" />
      <div className="relative z-10 mt-[2px] -mb-px flex h-[22px] items-stretch">
        {PANEL_TABS.map((t, i) => (
          <button key={t.label} type="button" className={`relative flex h-full items-stretch ${t.z} ${i ? "-ml-[13px]" : ""}`}>
            <span
              className={`flex items-center gap-[3px] rounded-tl-[3px] border-t border-l border-[#a5adbd] pb-px leading-4 ${i ? "border-b bg-[#d5d9ea] pl-2" : "bg-[#f7f7fa] pl-1"}`}
            >
              <svg viewBox="0 0 42 42" className="h-[14px] w-[14px]" fill="none" stroke="#222">
                {t.icon}
              </svg>
              <span className="pb-[2px]">{t.label}</span>
            </span>
            <svg viewBox="0 0 15 22" className="block h-[22px] w-[15px]" preserveAspectRatio="none">
              <path d="M0 0.500H1L15 21.500V22H0Z" fill={i ? "#d5d9ea" : "#f7f7fa"} />
              <path d={i ? "M0 0.500H1L15 21.500H0" : "M0 0.500H1L15 21.500"} stroke="#a5adbd" fill="none" />
            </svg>
          </button>
        ))}
        <button type="button" aria-label="Panel options" className="absolute right-[2px] bottom-0 z-50">
          <Gear />
        </button>
      </div>
      <div className="flex-1 border border-[#9ea6b8] bg-[#f7f7fa] pt-2 pr-[6px] pl-[3px]">
        <table className="w-full table-fixed border-separate border-spacing-0 border-t border-l border-[#dfe1e9]">
          <colgroup>
            <col className="w-2" />
            <col className="w-[83px]" />
            <col />
          </colgroup>
          {GROUPS.map((g, gi) => (
            <tbody key={g.title}>
              <tr>
                <th colSpan={3} scope="rowgroup" className={`border-r border-b border-[#dfe1e9] p-0 pl-[3px] text-left font-normal ${gi ? "h-[23px]" : "h-[22px]"}`}>
                  {g.title}
                </th>
              </tr>
              {g.rows.map((r) => {
                const id = `${g.title}-${r.label}`;
                return (
                  <tr key={r.label} className="h-[19px]">
                    <td className="p-0" />
                    <th scope="row" className="border-r border-b border-[#dfe1e9] bg-white p-0 pl-1 text-left font-normal">
                      <label htmlFor={id} className={r.kind === "off" ? "text-[#777]" : ""}>
                        {r.label}
                      </label>
                    </th>
                    <td className="border-r border-b border-[#dfe1e9] bg-white p-0">
                      <Value row={r} id={id} />
                    </td>
                  </tr>
                );
              })}
            </tbody>
          ))}
        </table>
      </div>
    </aside>
  );
}

/* ---------- page ---------- */

const MENUS = ["File", "Edit", "View", "Curve", "Surface", "Solid", "Mesh", "Dimension", "Transform", "Tools", "Analyze", "Render", "Panels", "Help"];
const TABS: { name: string; tight?: boolean }[] = [
  { name: "Standard", tight: true },
  { name: "CPlanes" },
  { name: "Set View" },
  { name: "Display" },
  { name: "Select" },
  { name: "Viewport Layout", tight: true },
  { name: "Visibility" },
  { name: "Transform", tight: true },
  { name: "Curve Tools" },
  { name: "Surface Tools" },
  { name: "Solid Tools" },
  { name: "Mesh Tools" },
  { name: "Render Tools" },
  { name: "Drafting" },
  { name: "New in V5" },
];
const VIEW_TABS = ["Perspective", "Top", "Front", "Right"];
const SNAPS = [
  ["Grid Snap", "w-[76px]"],
  ["Ortho", "w-[47px]"],
  ["Planar", "w-[54px]"],
  ["Osnap", "w-[54px]"],
  ["SmartTrack", "w-[86px]"],
  ["Gumball", "w-[66px]"],
  ["Record History", "w-[109px]"],
  ["Filter", "w-[45px]"],
];

function TitleBar() {
  return (
    <header className="relative flex h-[23px] items-start justify-center border-b border-[#55c3cc] bg-[#69e5ee]">
      <svg viewBox="0 0 48 48" className="absolute top-[3px] left-[2px] h-4 w-4">
        <rect width="48" height="48" fill="#1c1c1c" />
        <path d="M2 24L14 18L20 20L30 12L42 6L40 18L36 26L46 34L36 34L26 40L12 38L4 32Z" fill="#cfcfcf" />
        <path d="M6 6L20 10M26 4L34 6M6 42L16 44" stroke="#777" strokeWidth="3" />
        <path d="M8 28L16 26M20 34L28 30" stroke="#333" strokeWidth="3" />
      </svg>
      <h1 className="font-['Noto_Sans',sans-serif] text-sm leading-[23px] text-[#1f3a3c]">3D printed.3dm (152 KB) - Rhinoceros Corporate (32-bit)</h1>
      <div className="absolute top-0 right-[3px] flex">
        <button type="button" aria-label="Minimize" className="flex h-[19px] w-[26px] items-center justify-center">
          <svg viewBox="0 0 8 12" className="h-3 w-2"><path d="M0 9H8" stroke="#111" strokeWidth="2" /></svg>
        </button>
        <button type="button" aria-label="Restore" className="flex h-[19px] w-[26px] items-center justify-center">
          <svg viewBox="0 0 10 10" className="h-[10px] w-[10px]" fill="none" stroke="#111">
            <path d="M0.500 2.500H7.500V9.500H0.500ZM0 3.500H8M2 0.500H9.500V8" />
          </svg>
        </button>
        <button type="button" aria-label="Close" className="flex h-[19px] w-[45px] items-center justify-center bg-[#c75050]">
          <svg viewBox="0 0 8 8" className="h-2 w-2"><path d="M0.500 0.500L7.500 7.500M7.500 0.500L0.500 7.500" stroke="#fff" strokeWidth="1.800" /></svg>
        </button>
      </div>
    </header>
  );
}

function CommandArea() {
  return (
    <div className="flex pt-1 pr-px pb-[3px] pl-[3px]">
      <div className="mt-px mr-px w-[3px] border-x border-[#b4b9c6]" />
      <div className="flex-1 bg-white text-xs">
        <div className="flex h-[29px] border-b border-[#9da5b5]">
          <p className="flex-1 pl-px leading-4">Loading Rhino Render, version 1.50, Nov 12 2013, 18:42:48</p>
          <div className="flex w-4 flex-col items-center justify-around bg-[#f0f0f0]">
            <svg viewBox="0 0 8 6" className="h-[6px] w-2" fill="none" stroke="#555" strokeWidth="2"><path d="M0.500 5L4 1.500L7.500 5" /></svg>
            <svg viewBox="0 0 8 6" className="h-[6px] w-2" fill="none" stroke="#555" strokeWidth="2"><path d="M0.500 1L4 4.500L7.500 1" /></svg>
          </div>
        </div>
        <div className="flex h-[18px] items-start">
          <label htmlFor="command" className="pl-px leading-4 font-bold">Command:</label>
          <span className="ml-[2px] h-[15px] w-px bg-black" />
          <input id="command" className="h-4 min-w-0 flex-1 bg-white outline-none" />
          <div className="mr-px flex h-[18px] w-[14px] flex-col">
            <button type="button" aria-label="Previous command" className="flex flex-1 items-center justify-center border border-t-0 border-[#999] bg-[#f0f0f0]">
              <svg viewBox="0 0 5 3" className="h-[3px] w-[5px]"><path d="M0 3L2.500 0L5 3Z" /></svg>
            </button>
            <button type="button" aria-label="Next command" className="flex flex-1 items-center justify-center border border-t-0 border-[#999] bg-[#f0f0f0]">
              <svg viewBox="0 0 5 3" className="h-[3px] w-[5px]"><path d="M0 0L2.500 3L5 0Z" /></svg>
            </button>
          </div>
        </div>
      </div>
    </div>
  );
}

function ToolTabs() {
  return (
    <nav className="flex h-[19px] items-end border-b border-[#a0a8b8] pl-[6px] text-[11px]">
      {TABS.map((t, i) => (
        <button key={t.name} type="button" className={`relative flex items-stretch ${i ? "-ml-[2px] h-[15px]" : "z-10 -mb-px h-4"}`}>
          <svg viewBox="0 0 10 15" preserveAspectRatio="none" className="h-full w-[10px]">
            <path d="M0 15L8 0.500H10V15Z" fill={i ? "#d3d8e9" : "#f6f7f9"} />
            <path d="M0 15L7 2Q8 0.500 10 0.500" fill="none" stroke="#a0a8b8" />
          </svg>
          <span
            className={`rounded-tr-[4px] border-t border-r border-[#a0a8b8] pt-px leading-[14px] ${t.tight ? "pr-[6px]" : "pr-[9px]"} ${i ? "bg-[#d3d8e9]" : "bg-[#f6f7f9]"}`}
          >
            {t.name}
          </span>
        </button>
      ))}
      <button type="button" aria-label="Toolbar options" className="mr-[2px] mb-px ml-auto">
        <Gear />
      </button>
    </nav>
  );
}

function ViewTabs() {
  return (
    <nav className="flex h-[25px] items-stretch pt-px pb-px font-['Open_Sans',sans-serif] text-sm">
      {VIEW_TABS.map((t) => {
        const on = t === "Right";
        const bg = on ? "#ffffff" : "#d3d8e9";
        return (
          <button key={t} type="button" className={`relative flex items-stretch ${on ? "z-10 -ml-[10px]" : ""}`}>
            <svg viewBox="0 0 13 23" preserveAspectRatio="none" className={`h-full ${on ? "w-6" : "w-[13px]"}`}>
              <path d={on ? "M0 0H13V23H12Z" : "M0 0H13V23H9L0 12Z"} fill={bg} />
              <path d={on ? "M0 0L12 23" : "M0 0V12L9 22.500H13"} fill="none" stroke="#a5adbd" />
            </svg>
            <span className={`rounded-br-[4px] border-r border-b border-[#a5adbd] pt-px pr-[10px] leading-[21px] ${on ? "bg-white" : "bg-[#d3d8e9]"}`}>
              {t}
            </span>
          </button>
        );
      })}
      <button type="button" aria-label="New viewport" className="flex items-stretch">
        <svg viewBox="0 0 13 23" className="h-full w-[13px]" preserveAspectRatio="none">
          <path d="M0 12L9 22.500H13" fill="none" stroke="#a5adbd" />
        </svg>
        <span className="flex w-[26px] items-center rounded-br-[4px] border-r border-b border-[#a5adbd] pt-[2px] pl-1">
          <svg viewBox="0 0 9 9" className="h-[9px] w-[9px]" fill="#fff" stroke="#666">
            <path d="M3.500 0.500H5.500V3.500H8.500V5.500H5.500V8.500H3.500V5.500H0.500V3.500H3.500Z" />
          </svg>
        </span>
      </button>
    </nav>
  );
}

function StatusBar() {
  const cell = "flex h-full items-center justify-center border-r border-[#a5adbd]";
  return (
    <footer className="flex h-5 items-center border-t border-b-2 border-t-[#9ea6b8] border-b-[#6eb0b6] text-xs">
      <div className={`${cell} w-[57px]`}>CPlane</div>
      <div className={`${cell} w-[88px]`}>x 26.47</div>
      <div className={`${cell} w-[88px]`}>y 22.44</div>
      <div className={`${cell} w-[88px]`}>z 0.00</div>
      <div className={`${cell} w-[88px]`}>Millimeters</div>
      <div className="flex h-full flex-1 items-center border-r border-[#a5adbd] pl-[3px]">
        <span className="mr-[2px] h-[13px] w-[14px] bg-black" />
        Default
      </div>
      {SNAPS.map(([t, w]) => (
        <button key={t} type="button" className={`${cell} ${w} ${t === "SmartTrack" ? "bg-[#e5f3fd] font-bold" : ""}`}>
          {t}
        </button>
      ))}
      <div className="mr-[7px] flex h-full w-[240px] items-center border-r border-[#a5adbd] pl-[2px]">Minutes from last save: 1</div>
    </footer>
  );
}

export default function App() {
  return (
    <div className="flex min-h-screen flex-col bg-[#e0e3eb] font-['Liberation_Sans',Arial,sans-serif] text-black">
      <Defs />
      <TitleBar />
      <nav className="flex h-[19px] items-center gap-3 border-b border-[#e8e9ec] bg-[#f5f6f7] pt-[2px] pl-[7px] font-['Open_Sans',sans-serif] text-xs">
        {MENUS.map((m) => (
          <button key={m} type="button">{m}</button>
        ))}
      </nav>
      <CommandArea />
      <div className="border-t border-[#c3c8d4]">
        <ToolTabs />
        <MainToolbar />
      </div>
      <div className="flex flex-1">
        <SideToolbar />
        <main className="flex min-w-0 flex-1 flex-col pt-[5px] pr-[7px]">
          <div className="grid flex-1 grid-cols-[551fr_549fr] grid-rows-[284fr_283fr] gap-[2px]">
            <TopView />
            <PerspectiveView />
            <FrontView />
            <RightView />
          </div>
          <ViewTabs />
        </main>
        <PropertiesPanel />
      </div>
      <StatusBar />
    </div>
  );
}
